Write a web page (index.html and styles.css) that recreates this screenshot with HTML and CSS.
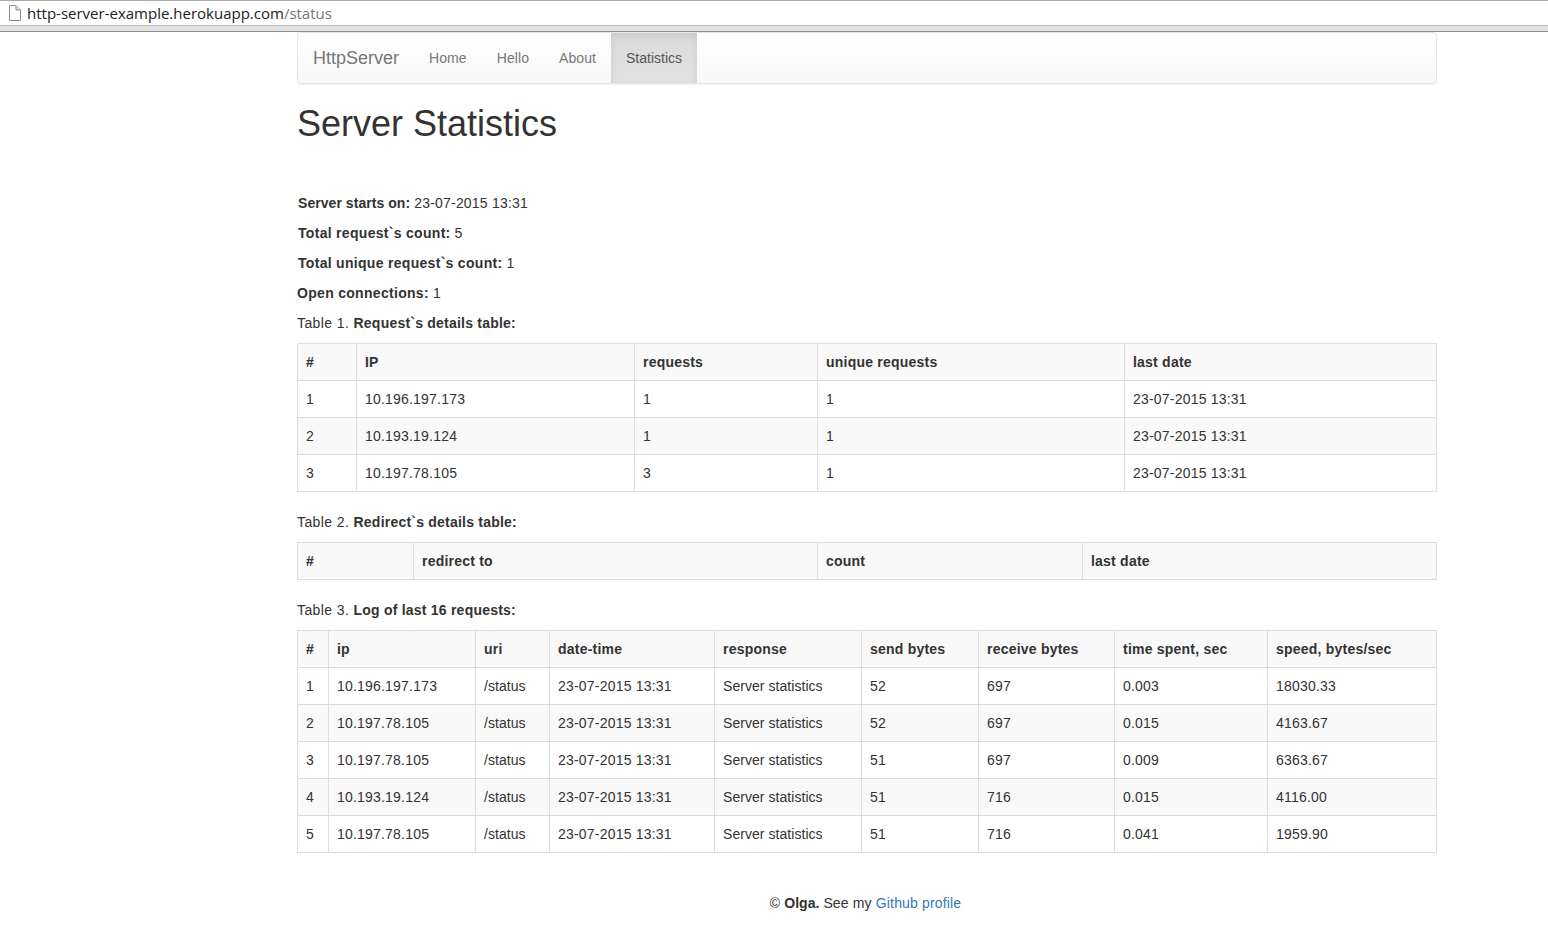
FILE: index.html
```html
<!DOCTYPE html>
<html lang="en">
<head>
  <meta charset="UTF-8" />
  <meta name="viewport" content="width=device-width, initial-scale=1.0" />
  <title>Server Statistics</title>
  <link rel="stylesheet" href="styles.css">
</head>
<body>
  <div class="address-bar">
    <svg class="page-icon" width="13" height="16" viewBox="0 0 13 16">
      <path d="M1.5 .5h6.500l4.500 4.500v10.500h-11z" fill="#fff" stroke="#8a8a8a"/>
      <path d="M8 .5v4.500h4.500" fill="#e4e4e4" stroke="#8a8a8a"/>
    </svg>
    <span class="url-host">http-server-example.herokuapp.com</span><span class="url-path">/status</span>
  </div>

  <div class="container">
    <nav class="navbar">
      <a class="brand" href="#">HttpServer</a>
      <a class="nav-link" href="#">Home</a>
      <a class="nav-link" href="#">Hello</a>
      <a class="nav-link" href="#">About</a>
      <a class="nav-link active" href="#">Statistics</a>
    </nav>

    <h1>Server Statistics</h1>

    <p class="nudge tight"><b>Server starts on:</b> 23-07-2015 13:31</p>
    <p class="nudge"><b>Total request`s count:</b> 5</p>
    <p class="nudge"><b>Total unique request`s count:</b> 1</p>
    <p><b>Open connections:</b> 1</p>

    <p class="caption">Table 1. <b>Request`s details table:</b></p>
    <table>
      <colgroup>
        <col class="t1-a"><col class="t1-b"><col class="t1-c"><col class="t1-d"><col>
      </colgroup>
      <thead>
        <tr><th>#</th><th>IP</th><th>requests</th><th>unique requests</th><th>last date</th></tr>
      </thead>
      <tbody>
        <tr><td>1</td><td>10.196.197.173</td><td>1</td><td>1</td><td>23-07-2015 13:31</td></tr>
        <tr><td>2</td><td>10.193.19.124</td><td>1</td><td>1</td><td>23-07-2015 13:31</td></tr>
        <tr><td>3</td><td>10.197.78.105</td><td>3</td><td>1</td><td>23-07-2015 13:31</td></tr>
      </tbody>
    </table>

    <p class="caption">Table 2. <b>Redirect`s details table:</b></p>
    <table>
      <colgroup>
        <col class="t2-a"><col class="t2-b"><col class="t2-c"><col>
      </colgroup>
      <thead>
        <tr><th>#</th><th>redirect to</th><th>count</th><th>last date</th></tr>
      </thead>
    </table>

    <p class="caption">Table 3. <b>Log of last 16 requests:</b></p>
    <table>
      <colgroup>
        <col class="t3-a"><col class="t3-b"><col class="t3-c"><col class="t3-d"><col class="t3-e"><col class="t3-f"><col class="t3-g"><col class="t3-h"><col>
      </colgroup>
      <thead>
        <tr><th>#</th><th>ip</th><th>uri</th><th>date-time</th><th>response</th><th>send bytes</th><th>receive bytes</th><th>time spent, sec</th><th>speed, bytes/sec</th></tr>
      </thead>
      <tbody class="log-rows">
        <tr><td>1</td><td>10.196.197.173</td><td>/status</td><td>23-07-2015 13:31</td><td>Server statistics</td><td>52</td><td>697</td><td>0.003</td><td>18030.33</td></tr>
        <tr><td>2</td><td>10.197.78.105</td><td>/status</td><td>23-07-2015 13:31</td><td>Server statistics</td><td>52</td><td>697</td><td>0.015</td><td>4163.67</td></tr>
        <tr><td>3</td><td>10.197.78.105</td><td>/status</td><td>23-07-2015 13:31</td><td>Server statistics</td><td>51</td><td>697</td><td>0.009</td><td>6363.67</td></tr>
        <tr><td>4</td><td>10.193.19.124</td><td>/status</td><td>23-07-2015 13:31</td><td>Server statistics</td><td>51</td><td>716</td><td>0.015</td><td>4116.00</td></tr>
        <tr><td>5</td><td>10.197.78.105</td><td>/status</td><td>23-07-2015 13:31</td><td>Server statistics</td><td>51</td><td>716</td><td>0.041</td><td>1959.90</td></tr>
      </tbody>
    </table>

    <footer class="footer">© <b>Olga.</b> See my <a href="#">Github profile</a></footer>
  </div>
</body>
</html>
```

FILE: styles.css
```css
* {
  box-sizing: border-box;
}
body {
  margin: 0;
  background: #fff;
  color: #333;
  font-family: "Liberation Sans", Arial, sans-serif;
  font-size: 14px;
  line-height: 20px;
  letter-spacing: 0.15px;
}
a {
  text-decoration: none;
}
b {
  font-weight: 700;
  letter-spacing: 0.3px;
}

/* browser chrome */
.address-bar {
  display: flex;
  align-items: center;
  height: 32px;
  padding: 0 0 7px 8px;
  background: #fff;
  border-top: 1px solid #a9a9a9;
  border-bottom: 1px solid #8f8f8f;
  box-shadow: inset 0 -5px 0 #e2e2e2, inset 0 -6px 0 #bcbcbc;
  font-family: "Open Sans", sans-serif;
  font-size: 15px;
  letter-spacing: 0;
}
.page-icon {
  margin-right: 6px;
}
.url-host {
  color: #222;
}
.url-path {
  color: #777;
}

.container {
  width: 1140px;
  margin-left: 297px;
}

/* navbar */
.navbar {
  display: flex;
  height: 52px;
  margin-bottom: 20px;
  background: linear-gradient(to bottom, #fff, #f8f8f8);
  border: 1px solid #e7e7e7;
  border-radius: 4px;
  box-shadow: 0 1px 2px rgba(0, 0, 0, 0.06);
  overflow: hidden;
}
.brand {
  padding: 15px;
  color: #777;
  font-size: 18px;
  letter-spacing: 0;
}
.nav-link {
  padding: 15px;
  color: #777;
  letter-spacing: 0.08px;
}
.nav-link.active {
  color: #555;
  letter-spacing: 0;
  background: linear-gradient(to bottom, #dbdbdb, #e2e2e2);
  box-shadow: inset 0 3px 9px rgba(0, 0, 0, 0.075);
}

h1 {
  margin: 0 0 49px;
  color: #333;
  font-size: 36px;
  font-weight: 500;
  line-height: 40px;
  letter-spacing: 0;
}

p {
  margin: 0 0 10px;
}
.nudge {
  padding-left: 1px;
}
.tight {
  letter-spacing: 0.2px;
}
.tight b {
  letter-spacing: 0.05px;
}
.caption {
  letter-spacing: 0.4px;
}
.caption b {
  letter-spacing: 0.22px;
}

/* tables */
table {
  width: 100%;
  margin-bottom: 20px;
  border-collapse: collapse;
  table-layout: fixed;
}
th, td {
  height: 37px;
  padding: 8px;
  border: 1px solid #ddd;
  text-align: left;
  letter-spacing: 0.2px;
}
th {
  font-weight: 700;
  letter-spacing: 0.22px;
}
thead tr, tbody tr:nth-child(even) {
  background: #f9f9f9;
}
.log-rows td:nth-child(3), .log-rows td:nth-child(5) {
  letter-spacing: 0.05px;
}

.t1-a { width: 59px; }
.t1-b { width: 278px; }
.t1-c { width: 183px; }
.t1-d { width: 307px; }

.t2-a { width: 116px; }
.t2-b { width: 404px; }
.t2-c { width: 265px; }

.t3-a { width: 31px; }
.t3-b { width: 147px; }
.t3-c { width: 74px; }
.t3-d { width: 165px; }
.t3-e { width: 147px; }
.t3-f { width: 117px; }
.t3-g { width: 136px; }
.t3-h { width: 153px; }

.footer {
  margin-top: 40px;
  padding-right: 3px;
  text-align: center;
}
.footer b {
  letter-spacing: 0;
}
.footer a {
  color: #337ab7;
}
```
